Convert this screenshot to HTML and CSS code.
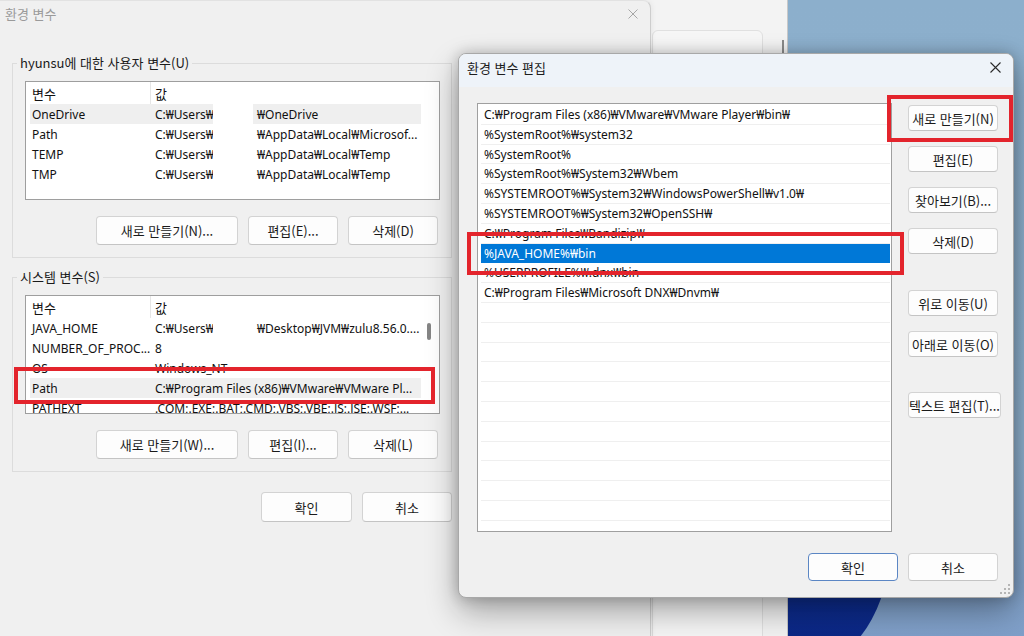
FILE: index.html
```html
<!DOCTYPE html>
<html lang="ko">
<head>
<meta charset="utf-8">
<title>환경 변수</title>
<link rel="stylesheet" href="styles.css">
</head>
<body>
<div class="desktop">
  <div class="bloom"></div>

  <div class="win-mid">
    <div class="mid-card"></div>
    <div class="mid-thumb"></div>
  </div>

  <section class="win-env">
    <header class="env-title">
      <span class="title-text">환경 변수</span>
      <svg class="close-icon" width="10" height="10" viewBox="0 0 10 10"><path d="M0.5 0.5L9.5 9.5M9.5 0.5L0.5 9.5" stroke="#a6a6a6" stroke-width="1" fill="none"/></svg>
    </header>
    <div class="env-body">
      <fieldset class="group">
        <legend>hyunsu에 대한 사용자 변수(U)</legend>
        <div class="listview">
          <div class="lv-main">
            <div class="lv-head"><span class="c1">변수</span><span class="c2 hsep">값</span></div>
            <div class="lv-row sel"><span class="c1">OneDrive</span><span class="c2"><span class="vpre">C:₩Users₩</span><span class="redact"></span>₩OneDrive</span></div>
            <div class="lv-row"><span class="c1">Path</span><span class="c2"><span class="vpre">C:₩Users₩</span><span class="redact"></span>₩AppData₩Local₩Microsof...</span></div>
            <div class="lv-row"><span class="c1">TEMP</span><span class="c2"><span class="vpre">C:₩Users₩</span><span class="redact"></span>₩AppData₩Local₩Temp</span></div>
            <div class="lv-row"><span class="c1">TMP</span><span class="c2"><span class="vpre">C:₩Users₩</span><span class="redact"></span>₩AppData₩Local₩Temp</span></div>
          </div>
          <div class="lv-scroll"></div>
        </div>
        <div class="btnrow">
          <button class="btn w142">새로 만들기(N)...</button>
          <button class="btn w90">편집(E)...</button>
          <button class="btn w90">삭제(D)</button>
        </div>
      </fieldset>

      <fieldset class="group group2">
        <legend>시스템 변수(S)</legend>
        <div class="listview">
          <div class="lv-main">
            <div class="lv-head"><span class="c1">변수</span><span class="c2 hsep">값</span></div>
            <div class="lv-row"><span class="c1">JAVA_HOME</span><span class="c2"><span class="vpre">C:₩Users₩</span><span class="redact r2"></span>₩Desktop₩JVM₩zulu8.56.0....</span></div>
            <div class="lv-row"><span class="c1">NUMBER_OF_PROC...</span><span class="c2">8</span></div>
            <div class="lv-row"><span class="c1">OS</span><span class="c2">Windows_NT</span></div>
            <div class="lv-row sel"><span class="c1">Path</span><span class="c2">C:₩Program Files (x86)₩VMware₩VMware Pl...</span></div>
            <div class="lv-row"><span class="c1">PATHEXT</span><span class="c2">.COM;.EXE;.BAT;.CMD;.VBS;.VBE;.JS;.JSE;.WSF;...</span></div>
          </div>
          <div class="lv-scroll"><div class="thumb"></div></div>
        </div>
        <div class="btnrow">
          <button class="btn w142">새로 만들기(W)...</button>
          <button class="btn w90">편집(I)...</button>
          <button class="btn w90">삭제(L)</button>
        </div>
      </fieldset>

      <div class="dlg-buttons">
        <button class="btn w91 h30">확인</button>
        <button class="btn w90 h30">취소</button>
      </div>
    </div>
  </section>

  <section class="win-edit">
    <header class="edit-title">
      <span class="title-text dark">환경 변수 편집</span>
      <svg class="close-icon" width="11" height="11" viewBox="0 0 11 11"><path d="M0.5 0.5L10.5 10.5M10.5 0.5L0.5 10.5" stroke="#2a2a2a" stroke-width="1.1" fill="none"/></svg>
    </header>
    <div class="edit-body">
      <div class="pathlist">
        <div class="p-row">C:₩Program Files (x86)₩VMware₩VMware Player₩bin₩</div>
        <div class="p-row">%SystemRoot%₩system32</div>
        <div class="p-row">%SystemRoot%</div>
        <div class="p-row">%SystemRoot%₩System32₩Wbem</div>
        <div class="p-row">%SYSTEMROOT%₩System32₩WindowsPowerShell₩v1.0₩</div>
        <div class="p-row">%SYSTEMROOT%₩System32₩OpenSSH₩</div>
        <div class="p-row">C:₩Program Files₩Bandizip₩</div>
        <div class="p-row sel">%JAVA_HOME%₩bin</div>
        <div class="p-row">%USERPROFILE%₩.dnx₩bin</div>
        <div class="p-row">C:₩Program Files₩Microsoft DNX₩Dnvm₩</div>
        <div class="p-row"></div>
        <div class="p-row"></div>
        <div class="p-row"></div>
        <div class="p-row"></div>
        <div class="p-row"></div>
        <div class="p-row"></div>
        <div class="p-row"></div>
        <div class="p-row"></div>
        <div class="p-row"></div>
        <div class="p-row"></div>
        <div class="p-row"></div>
        <div class="p-row"></div>
      </div>
      <div class="side-buttons">
        <button class="btn sb">새로 만들기(N)</button>
        <button class="btn sb">편집(E)</button>
        <button class="btn sb">찾아보기(B)...</button>
        <button class="btn sb">삭제(D)</button>
        <button class="btn sb gap36">위로 이동(U)</button>
        <button class="btn sb">아래로 이동(O)</button>
        <button class="btn sb gap35 w93">텍스트 편집(T)...</button>
      </div>
    </div>
    <div class="edit-footer">
      <button class="btn w90 h28 default">확인</button>
      <button class="btn w90 h28">취소</button>
    </div>
    <svg class="grip" width="10" height="10" viewBox="0 0 10 10">
      <rect x="8" y="0" width="2" height="2" fill="#b5b5b5"/>
      <rect x="4" y="4" width="2" height="2" fill="#b5b5b5"/>
      <rect x="8" y="4" width="2" height="2" fill="#b5b5b5"/>
      <rect x="0" y="8" width="2" height="2" fill="#b5b5b5"/>
      <rect x="4" y="8" width="2" height="2" fill="#b5b5b5"/>
      <rect x="8" y="8" width="2" height="2" fill="#b5b5b5"/>
    </svg>
  </section>

  <div class="mark mark-path"></div>
  <div class="mark mark-new"></div>
  <div class="mark mark-java"></div>
</div>
</body>
</html>
```
FILE: styles.css
```css
* { box-sizing: border-box; }

html, body {
  margin: 0;
  padding: 0;
}

body {
  width: 1024px;
  height: 636px;
  overflow: hidden;
  font-family: "Noto Sans", "Noto Sans CJK KR", sans-serif;
  font-size: 12px;
  color: #111;
}

.desktop {
  position: relative;
  width: 1024px;
  height: 636px;
  overflow: hidden;
  background: linear-gradient(180deg, #8cafcc 0%, #8eb0cd 70%, #7f9fc9 100%);
}

/* Windows 11 bloom at bottom */
.bloom {
  position: absolute;
  left: 788px;
  top: 520px;
  width: 106px;
  height: 140px;
  background: linear-gradient(180deg, #1d49ad 0%, #0d2c8e 60%, #0a2480 100%);
  border-bottom-right-radius: 140px 260px;
}

/* window behind, between the two dialogs */
.win-mid {
  position: absolute;
  left: 630px;
  top: -10px;
  width: 158px;
  height: 660px;
  background: #f3f3f3;
  border-right: 1px solid #c8c8c8;
  display: flex;
  align-items: flex-start;
  padding-top: 40px;
}

.mid-card {
  margin-left: 22px;
  width: 111px;
  height: 640px;
  background: #f6f6f6;
  border: 1px solid #e0e0e0;
  border-radius: 6px;
}

.mid-thumb {
  margin-left: auto;
  margin-right: 3px;
  margin-top: 10px;
  width: 2px;
  height: 13px;
  background: #8a8a8a;
}

/* Left dialog : 환경 변수 */
.win-env {
  position: absolute;
  left: 0;
  top: 0;
  width: 651px;
  height: 660px;
  background: #f0f0f0;
  border-right: 1px solid #cdcdcd;
  border-top: 1px solid #e2e2e2;
  border-top-right-radius: 8px;
  box-shadow: 0 0 6px rgba(0, 0, 0, 0.08);
}

.env-title {
  height: 25px;
  display: flex;
  align-items: center;
  justify-content: space-between;
  padding: 0 12px 0 5px;
}

.title-text {
  font-family: "Noto Sans CJK KR", "Noto Sans", sans-serif;
  font-size: 13px;
  color: #9a9a9a;
  line-height: 16px;
}

.title-text.dark {
  color: #1c1c1c;
}

.env-body {
  padding-left: 12px;
  width: 452px;
}

.group {
  margin: 29px 0 0 0;
  padding: 0 13px 12px 12px;
  border: 1px solid #dcdcdc;
  min-width: 0;
  width: 440px;
}

.group2 {
  margin-top: 11px;
}

.group legend {
  padding: 0 3px;
  margin-left: -8px;
  line-height: 16px;
  font-family: "Noto Sans CJK KR", "Noto Sans", sans-serif;
  font-size: 13px;
  color: #1a1a1a;
}

.listview {
  margin-top: 10px;
  width: 415px;
  height: 119px;
  border: 1px solid #9e9e9e;
  background: #fff;
  display: flex;
  overflow: hidden;
}

.lv-main {
  width: 395px;
  padding-left: 4px;
  flex: none;
}

.lv-scroll {
  width: 18px;
  flex: none;
}

.thumb {
  margin: 27px 0 0 6px;
  width: 4px;
  height: 17px;
  background: #858585;
  border-radius: 2px;
}

.lv-head,
.lv-row {
  display: flex;
  align-items: center;
  white-space: nowrap;
  overflow: hidden;
}

.lv-head {
  height: 22px;
  font-family: "Noto Sans CJK KR", "Noto Sans", sans-serif;
  font-size: 13px;
}

.lv-row {
  height: 20px;
}

.lv-row.sel {
  background: #efefef;
}

.c1 {
  width: 120px;
  flex: none;
  padding-left: 2px;
  overflow: hidden;
}

.c2 {
  flex: 1;
  padding-left: 5px;
  overflow: hidden;
  display: flex;
  align-items: center;
  height: 100%;
}

.c2.hsep {
  border-left: 1px solid #e6e6e6;
  padding-left: 4px;
}

.vpre {
  display: inline-block;
  width: 58px;
  flex: none;
  overflow: hidden;
}

.redact {
  display: inline-block;
  flex: none;
  width: 40px;
  height: 20px;
  margin-right: 4px;
  background: #fff;
}

.redact.r2 {
  width: 42px;
  margin-right: 2px;
}

.btnrow {
  margin-top: 16px;
  display: flex;
  justify-content: flex-end;
  gap: 10px;
}

.btn {
  font-family: "Noto Sans CJK KR", "Noto Sans", sans-serif;
  font-size: 13px;
  color: #1a1a1a;
  background: #fdfdfd;
  border: 1px solid #d3d3d3;
  border-bottom-color: #c4c4c4;
  border-radius: 4px;
  height: 29px;
  padding: 0;
  margin: 0;
  white-space: nowrap;
  display: flex;
  align-items: center;
  justify-content: center;
}

.w142 { width: 142px; }
.w90 { width: 90px; }
.w91 { width: 91px; }
.w93 { width: 93px; }
.h30 { height: 30px; }
.h28 { height: 28px; }

.dlg-buttons {
  margin-top: 20px;
  width: 440px;
  display: flex;
  justify-content: flex-end;
  gap: 10px;
}

/* Right dialog : 환경 변수 편집 */
.win-edit {
  position: absolute;
  left: 458px;
  top: 53px;
  width: 556px;
  height: 545px;
  background: #f0f0f0;
  border: 1px solid #a8a8a8;
  border-radius: 8px;
  overflow: hidden;
  box-shadow: 0 0 14px rgba(0, 0, 0, 0.22), 0 14px 32px rgba(0, 0, 0, 0.32);
  display: flex;
  flex-direction: column;
}

.edit-title {
  height: 33px;
  flex: none;
  background: #eef3f9;
  display: flex;
  align-items: center;
  justify-content: space-between;
  padding: 0 12px 6px 8px;
}

.edit-body {
  display: flex;
  padding: 16px 0 0 18px;
}

.pathlist {
  width: 415px;
  height: 429px;
  flex: none;
  border: 1px solid #9f9f9f;
  background: #fff;
  padding: 1px 1px 0 3px;
  overflow: hidden;
}

.p-row {
  height: 19.8px;
  line-height: 20px;
  padding-left: 3px;
  border-bottom: 1px solid #efefef;
  white-space: nowrap;
  overflow: hidden;
  color: #111;
}

.p-row.sel {
  background: #0078d7;
  color: #fff;
  border-bottom-color: #0078d7;
}

.side-buttons {
  margin-left: 16px;
  margin-top: 2px;
  display: flex;
  flex-direction: column;
  gap: 15px;
  align-items: flex-start;
}

.btn.sb {
  width: 90px;
  height: 26px;
}

.btn.sb.w93 {
  width: 93px;
}

.gap36 { margin-top: 21px; }
.gap35 { margin-top: 20px; }

.edit-footer {
  margin-top: 21px;
  padding-right: 15px;
  display: flex;
  justify-content: flex-end;
  gap: 10px;
}

.btn.default {
  border: 1px solid #5b86c4;
}

.grip {
  position: absolute;
  right: 3px;
  bottom: 3px;
}

/* red annotation boxes */
.mark {
  position: absolute;
  border: 4px solid #e3242c;
  pointer-events: none;
}

.mark-path {
  left: 14px;
  top: 367px;
  width: 421px;
  height: 37px;
}

.mark-new {
  left: 887px;
  top: 95px;
  width: 126px;
  height: 47px;
}

.mark-java {
  left: 467px;
  top: 232px;
  width: 437px;
  height: 43px;
}
```
